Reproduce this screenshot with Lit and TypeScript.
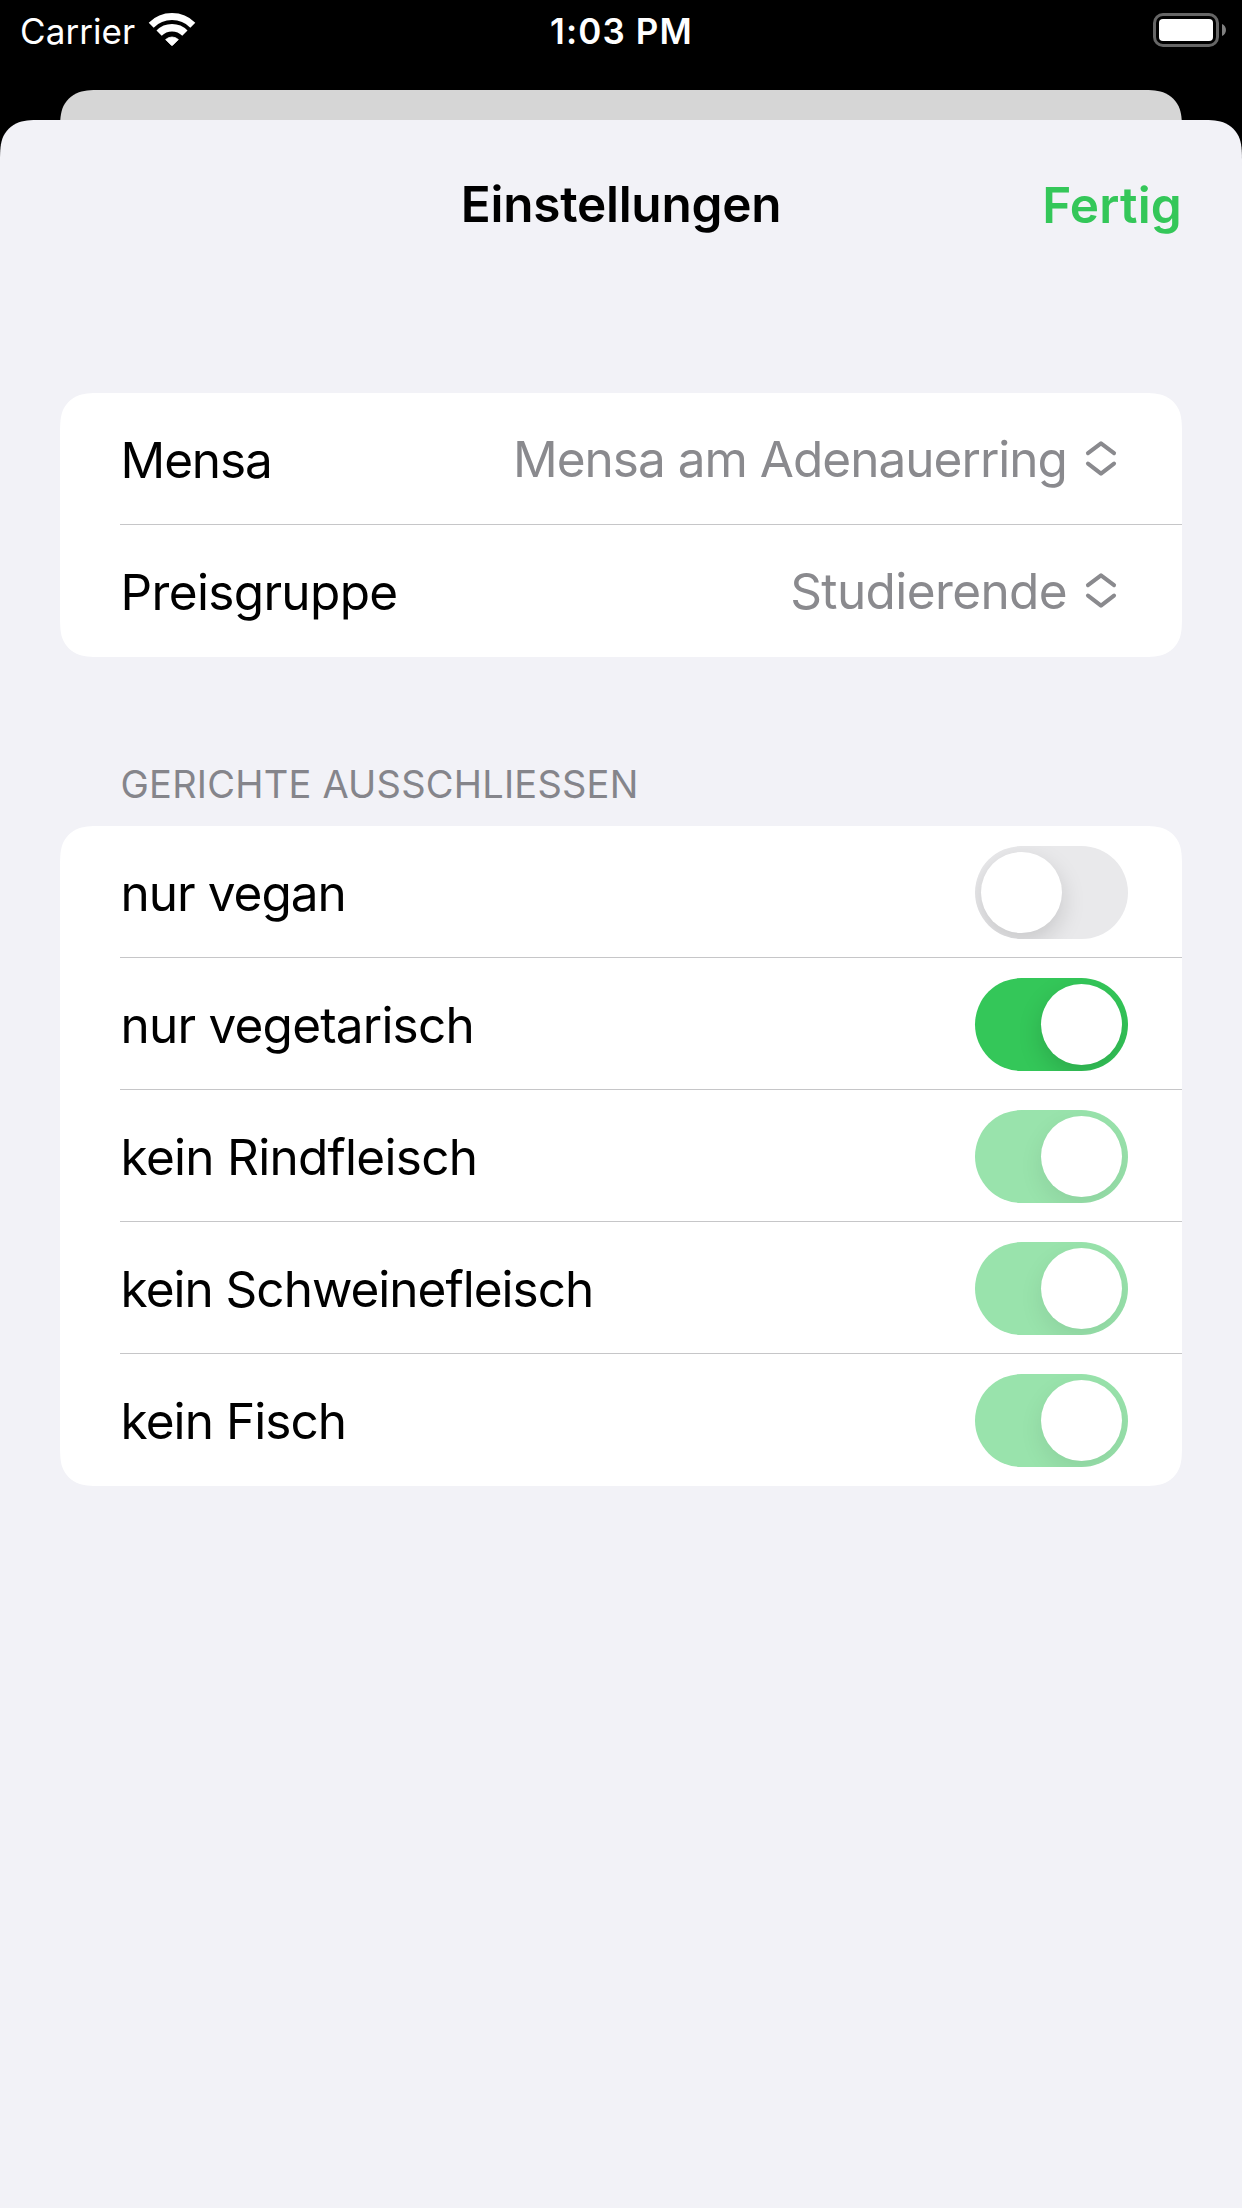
import { LitElement, html, css, svg, unsafeCSS } from "lit";
import { customElement, property, state } from "lit/decorators.js";
import { classMap } from "lit/directives/class-map.js";
import { styleMap } from "lit/directives/style-map.js";

/** Outline of a rectangle with continuous-curvature corners. */
function smoothRect(w: number, h: number, r: number): string {
  const a = 1.52866498 * r;
  const b = 1.08849296 * r;
  const c = 0.86840694 * r;
  const d = 0.63149379 * r;
  const e = 0.07491139 * r;
  const f = 0.37282383 * r;
  const g = 0.16905956 * r;
  const p = (x: number, y: number) => `${x.toFixed(2)} ${y.toFixed(2)}`;
  return [
    `M${p(a, 0)} L${p(w - a, 0)}`,
    `C${p(w - b, 0)} ${p(w - c, 0)} ${p(w - d, e)}`,
    `C${p(w - f, g)} ${p(w - g, f)} ${p(w - e, d)}`,
    `C${p(w, c)} ${p(w, b)} ${p(w, a)}`,
    `L${p(w, h - a)}`,
    `C${p(w, h - b)} ${p(w, h - c)} ${p(w - e, h - d)}`,
    `C${p(w - g, h - f)} ${p(w - f, h - g)} ${p(w - d, h - e)}`,
    `C${p(w - c, h)} ${p(w - b, h)} ${p(w - a, h)}`,
    `L${p(a, h)}`,
    `C${p(b, h)} ${p(c, h)} ${p(d, h - e)}`,
    `C${p(f, h - g)} ${p(g, h - f)} ${p(e, h - d)}`,
    `C${p(0, h - c)} ${p(0, h - b)} ${p(0, h - a)}`,
    `L${p(0, a)}`,
    `C${p(0, b)} ${p(0, c)} ${p(e, d)}`,
    `C${p(g, f)} ${p(f, g)} ${p(d, e)}`,
    `C${p(c, 0)} ${p(b, 0)} ${p(a, 0)}Z`,
  ].join(" ");
}

const clip = (w: number, h: number, r: number) =>
  unsafeCSS(`path("${smoothRect(w, h, r)}")`);

@customElement("status-bar")
export class StatusBar extends LitElement {
  static styles = css`
    :host {
      display: grid;
      grid-template-columns: 1fr auto 1fr;
      height: 90px;
      color: #fff;
      font-size: 35px;
      line-height: 62px;
    }
    .left {
      display: flex;
      align-items: flex-start;
      padding-left: 20px;
      gap: 13px;
      letter-spacing: 0.08px;
    }
    .time {
      font-weight: 580;
      letter-spacing: 1.15px;
      padding-left: 1px;
    }
    .right {
      display: flex;
      justify-content: flex-end;
      align-items: flex-start;
      padding-right: 15px;
    }
    svg {
      display: block;
      margin-top: 12px;
    }
  `;

  render() {
    return html`
      <div class="left">
        <span>Carrier</span>
        <svg width="48" height="36" viewBox="0 0 48 36" fill="none" stroke="#fff">
          <path d="M3.2 13.2A29.4 29.4 0 0 1 44.8 13.2" stroke-width="7" />
          <path d="M11.1 21.1A18.2 18.2 0 0 1 36.9 21.1" stroke-width="7.4" />
          <path
            d="M17.6 27.6A9.2 9.2 0 0 1 30.4 27.6L24.6 33.3Q24 33.8 23.4 33.3Z"
            fill="#fff"
            stroke-width="0.8"
            stroke-linejoin="round"
          />
        </svg>
      </div>
      <div class="time">1:03 PM</div>
      <div class="right">
        <svg width="74" height="36" viewBox="0 0 74 36">
          <rect x="1.5" y="2.5" width="63" height="31" rx="8.5" fill="none" stroke="#666" stroke-width="3" />
          <rect x="6" y="7" width="54" height="22" rx="4" fill="#fff" />
          <path d="M69 12C74.3 14 74.3 22 69 24Z" fill="#808080" />
        </svg>
      </div>
    `;
  }
}

@customElement("toggle-switch")
export class ToggleSwitch extends LitElement {
  @property({ type: Boolean }) on = false;
  @property({ type: Boolean }) disabled = false;

  static styles = css`
    :host {
      display: block;
    }
    .track {
      box-sizing: border-box;
      display: flex;
      justify-content: flex-start;
      width: 153px;
      height: 93px;
      padding: 6px;
      border-radius: 46.5px;
      background: #e9e9eb;
      overflow: hidden;
    }
    .track.on {
      justify-content: flex-end;
      background: #34c759;
    }
    .track.disabled {
      background: #99e3ac;
    }
    .thumb {
      width: 81px;
      height: 81px;
      border-radius: 50%;
      background: #fff;
      box-shadow: 0 9px 24px rgba(0, 0, 0, 0.15);
    }
    .disabled .thumb {
      box-shadow: 0 9px 24px rgba(0, 0, 0, 0.08);
    }
  `;

  render() {
    return html`<div
      class=${classMap({ track: true, on: this.on, disabled: this.disabled })}
      role="switch"
      aria-checked=${this.on ? "true" : "false"}
    >
      <div class="thumb"></div>
    </div>`;
  }
}

interface Label {
  text: string;
  tracking: number;
}

interface Picker {
  label: Label;
  value: Label;
}

interface Filter {
  label: Label;
  on: boolean;
  disabled: boolean;
}

@customElement("app-root")
export class AppRoot extends LitElement {
  @state() private pickers: Picker[] = [
    {
      label: { text: "Mensa", tracking: -1.15 },
      value: { text: "Mensa am Adenauerring", tracking: -0.98 },
    },
    {
      label: { text: "Preisgruppe", tracking: -0.66 },
      value: { text: "Studierende", tracking: -0.601 },
    },
  ];

  @state() private filters: Filter[] = [
    { label: { text: "nur vegan", tracking: -1 }, on: false, disabled: false },
    { label: { text: "nur vegetarisch", tracking: -0.8 }, on: true, disabled: false },
    { label: { text: "kein Rindfleisch", tracking: -0.73 }, on: true, disabled: true },
    { label: { text: "kein Schweinefleisch", tracking: -1.01 }, on: true, disabled: true },
    { label: { text: "kein Fisch", tracking: -0.95 }, on: true, disabled: true },
  ];

  static styles = css`
    :host {
      display: flex;
      flex-direction: column;
      width: 1242px;
      height: 2208px;
      overflow: hidden;
      background: #000;
      color: #000;
      font-family: Inter, "Liberation Sans", sans-serif;
      font-size: 49.5px;
    }
    .peek {
      height: 30px;
      margin: 0 60px;
      overflow: hidden;
    }
    .peek-sheet {
      height: 200px;
      background: #d6d6d6;
      clip-path: ${clip(1122, 200, 30)};
    }
    .sheet {
      flex: 1;
      background: #f2f2f7;
      clip-path: ${clip(1242, 2300, 30)};
    }
    .nav {
      display: grid;
      grid-template-columns: 1fr auto 1fr;
      height: 273px;
      padding: 0 60px;
      font-weight: 600;
      line-height: 168px;
    }
    .title {
      grid-column: 2;
      letter-spacing: -0.24px;
    }
    .done {
      justify-self: end;
      color: #34c759;
      letter-spacing: 0.19px;
      padding-top: 1px;
    }
    .card {
      margin: 0 60px;
      padding-left: 60px;
      background: #fff;
    }
    .card.pickers {
      clip-path: ${clip(1122, 264, 30)};
    }
    .card.filters {
      clip-path: ${clip(1122, 660, 30)};
    }
    .row {
      box-sizing: border-box;
      display: flex;
      justify-content: space-between;
      height: 132px;
      padding-right: 54px;
      line-height: 132px;
      border-bottom: 1px solid #c6c6c8;
    }
    .row:last-child {
      border-bottom: 0;
    }
    .label {
      padding: 1px 0 0 0.6px;
      white-space: nowrap;
    }
    .value {
      display: flex;
      color: #8a8a8e;
      white-space: nowrap;
      padding-right: 10px;
    }
    .chevrons {
      display: block;
      margin: 47px 0 0 17px;
    }
    .heading {
      height: 169px;
      box-sizing: border-box;
      padding: 97px 0 0 120.5px;
      color: #85858b;
      font-size: 38px;
      line-height: 60px;
      letter-spacing: 0.22px;
      text-transform: uppercase;
    }
    toggle-switch {
      margin-top: 20px;
    }
  `;

  private text(label: Label, cls: string) {
    return html`<span
      class=${cls}
      style=${styleMap({ letterSpacing: `${label.tracking}px` })}
      >${label.text}</span
    >`;
  }

  private chevrons() {
    return html`<svg class="chevrons" width="34" height="38" viewBox="0 0 34 38">
      ${svg`<path
        d="M4 13.2L17 3.3L30 13.2M4 23.6L17 33.6L30 23.6"
        fill="none" stroke="#8a8a8e" stroke-width="4.1"
        stroke-linecap="round" stroke-linejoin="round" />`}
    </svg>`;
  }

  render() {
    return html`
      <status-bar></status-bar>
      <div class="peek"><div class="peek-sheet"></div></div>
      <main class="sheet">
        <header class="nav">
          <div class="title">Einstellungen</div>
          <div class="done">Fertig</div>
        </header>
        <section class="card pickers">
          ${this.pickers.map(
            (p) => html`<div class="row">
              ${this.text(p.label, "label")}
              <div class="value">${this.text(p.value, "value-text")}${this.chevrons()}</div>
            </div>`
          )}
        </section>
        <div class="heading">Gerichte ausschliessen</div>
        <section class="card filters">
          ${this.filters.map(
            (f) => html`<div class="row">
              ${this.text(f.label, "label")}
              <toggle-switch ?on=${f.on} ?disabled=${f.disabled}></toggle-switch>
            </div>`
          )}
        </section>
      </main>
    `;
  }
}
